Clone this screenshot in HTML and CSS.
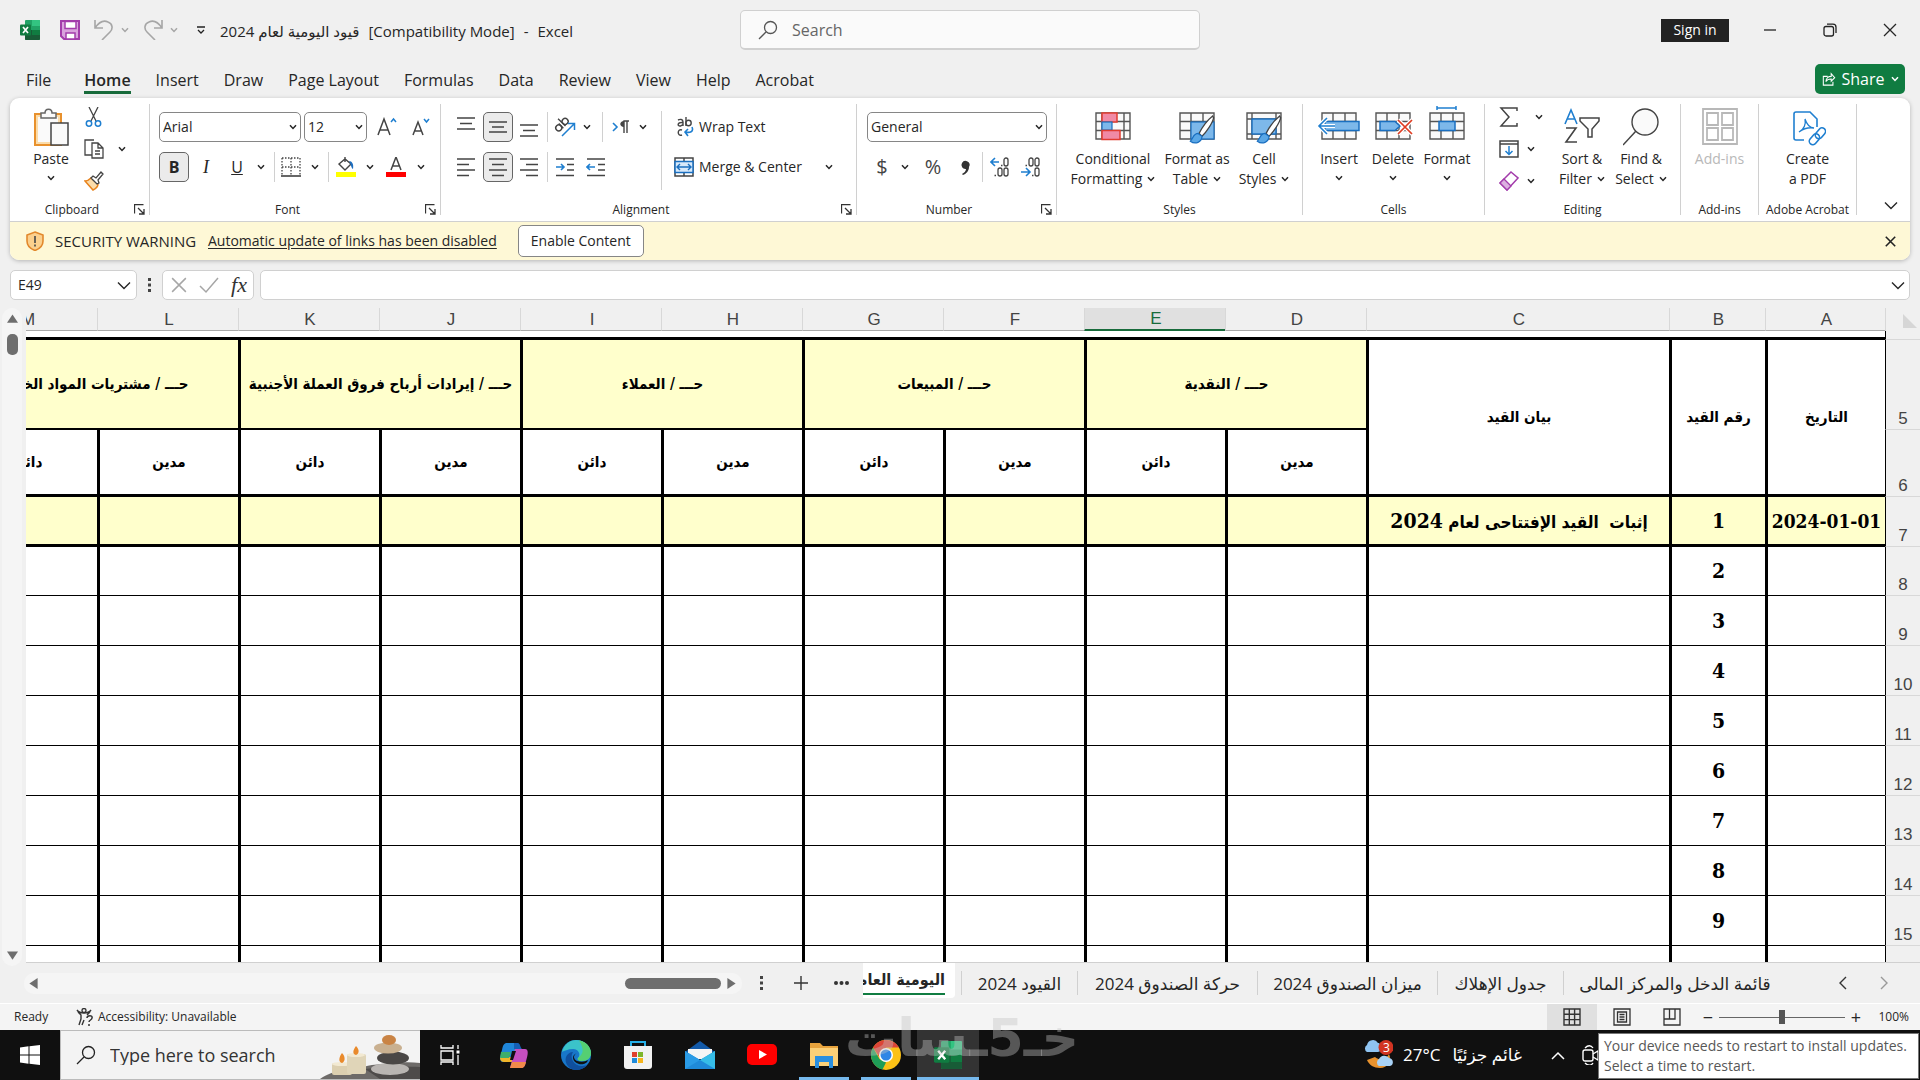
FILE: index.html
```html
<!DOCTYPE html>
<html lang="en">
<head>
<meta charset="utf-8">
<title>Excel</title>
<link rel="stylesheet" href="styles.css">
</head>
<body>
<svg class="defs" aria-hidden="true">
  <symbol id="chev" viewBox="0 0 8 6"><path d="M1 1.2 4 4.4 7 1.2" fill="none" stroke="currentColor" stroke-width="1.5"/></symbol>
  <symbol id="bigchev" viewBox="0 0 14 9"><path d="M1 1.5 7 7.5 13 1.5" fill="none" stroke="currentColor" stroke-width="1.4"/></symbol>
  <symbol id="launch" viewBox="0 0 11 11"><path d="M.5 9.500V.5h9M4 4l5.500 5.500M10 5v5H5" fill="none" stroke="#333" stroke-width="1.300"/></symbol>
  <symbol id="lens" viewBox="0 0 20 20"><circle cx="12.500" cy="7.500" r="6" fill="none" stroke="currentColor" stroke-width="1.300"/><path d="M8 12 1 19" stroke="currentColor" stroke-width="1.300"/></symbol>
  <symbol id="cross" viewBox="0 0 14 14"><path d="M1 1l12 12M13 1 1 13" stroke="currentColor" stroke-width="1.300"/></symbol>
  <symbol id="excel" viewBox="0 0 20 20"><rect x="5" y="0" width="15" height="20" rx="1" fill="#21a366"/><path d="M12 0h7a1 1 0 0 1 1 1v5h-8z" fill="#33c481"/><path d="M5 10h15v9a1 1 0 0 1-1 1H6a1 1 0 0 1-1-1z" fill="#185c37"/><path d="M12 10h8v5h-8z" fill="#107c41"/><rect x="0" y="4.500" width="11" height="11" rx="1" fill="#107c41"/><path d="M3 7l5 6M8 7l-5 6" stroke="#fff" stroke-width="1.700"/></symbol>
  <symbol id="cells" viewBox="0 0 36 28"><path d="M1 1h34v26H1zM1 9.500h34M1 18.500h34M12 1v26M24 1v26" fill="#fafafa" stroke="#555" stroke-width="1.400"/></symbol>
  <symbol id="brush" viewBox="0 0 26 32"><path d="M24 1C19 5 13 13 10 19l3 3C18 17 24 8 25 3z" fill="#fff" stroke="#444" stroke-width="1.300"/><path d="M9 19c-5 0-5 5-8 8 5 4 12 1 12-5z" fill="#5aa7e6" stroke="#1a6fc0" stroke-width="1.300"/></symbol>
</svg>

<header class="titlebar">
  <div class="quick">
    <svg class="i20" aria-hidden="true"><use href="#excel"/></svg>
    <button class="plain" aria-label="Save"><svg class="i20" viewBox="0 0 20 20"><path d="M1 1h18v18H4l-3-3z" fill="#d9a3dd" stroke="#a33cab" stroke-width="2"/><path d="M5 1.500h11v7H5z" fill="#fff" stroke="#a33cab" stroke-width="1.500"/><path d="M6 13h9v6H6z" fill="#fff" stroke="#a33cab" stroke-width="1.500"/></svg></button>
    <button class="plain dim wide" aria-label="Undo"><svg class="i20" viewBox="0 0 20 20"><path d="M1 0v8h8M1 8C5 2 10 0 14 2c5 2 5 7 2 10l-8 8" fill="none" stroke="currentColor" stroke-width="1.600"/></svg><svg class="chev"><use href="#chev"/></svg></button>
    <button class="plain dim wide" aria-label="Redo"><svg class="i20" viewBox="0 0 20 20"><path d="M19 0v8h-8M19 8C15 2 10 0 6 2 1 4 1 9 4 12l8 8" fill="none" stroke="currentColor" stroke-width="1.600"/></svg><svg class="chev"><use href="#chev"/></svg></button>
    <button class="plain" aria-label="Customize"><svg class="custom" viewBox="0 0 10 9"><path d="M1 1h8M2 4l3 3 3-3" fill="none" stroke="#222" stroke-width="1.300"/></svg></button>
    <h1 class="doc"><bdi>قيود اليومية لعام 2024</bdi><span>[Compatibility Mode]</span><span>-</span><span>Excel</span></h1>
  </div>
  <label class="search"><svg class="i20"><use href="#lens"/></svg><input type="text" placeholder="Search" aria-label="Search"></label>
  <div class="winctl">
    <button class="signin">Sign in</button>
    <button class="plain" aria-label="Minimize"><svg class="i14" viewBox="0 0 14 14"><path d="M1 7h12" stroke="#222" stroke-width="1.300"/></svg></button>
    <button class="plain" aria-label="Restore"><svg class="i14" viewBox="0 0 14 14"><rect x="1" y="3.500" width="9.500" height="9.500" rx="2" fill="none" stroke="#222" stroke-width="1.300"/><path d="M4 1.200h6a3 3 0 0 1 3 3V10" fill="none" stroke="#222" stroke-width="1.300"/></svg></button>
    <button class="plain" aria-label="Close"><svg class="i14"><use href="#cross"/></svg></button>
  </div>
</header>

<nav class="tabs">
  <a href="#">File</a><a href="#" class="on">Home</a><a href="#">Insert</a><a href="#">Draw</a><a href="#">Page Layout</a><a href="#">Formulas</a><a href="#">Data</a><a href="#">Review</a><a href="#">View</a><a href="#">Help</a><a href="#">Acrobat</a>
  <button class="share"><svg class="i14" viewBox="0 0 15 16"><path d="M6 5H1v10h11v-4M4 11c0-4 3-6 6-6V2l4 4.500-4 4V8c-3 0-5 1-6 3z" fill="none" stroke="#fff" stroke-width="1.200"/></svg>Share<svg class="chev"><use href="#chev"/></svg></button>
</nav>

<section class="panel">
<div class="ribbon">
  <section class="group g-clip">
    <div class="tools">
      <button class="big"><svg class="art" viewBox="0 0 36 38"><rect x="2" y="6" width="26" height="31" fill="#fbdcaa" stroke="#e8912d" stroke-width="2"/><rect x="5" y="9" width="20" height="25" fill="#fafafa"/><path d="M8 10V5h4c0-5 7-5 7 0h4v5z" fill="#fafafa" stroke="#666" stroke-width="1.500"/><rect x="18" y="15" width="17" height="22" fill="#fafafa" stroke="#444" stroke-width="1.500"/></svg><span>Paste</span><svg class="chev"><use href="#chev"/></svg></button>
      <div class="stack">
        <button class="mini" aria-label="Cut"><svg class="i20" viewBox="0 0 20 20"><path d="M5 0l7 14M14 0 7 14" stroke="#444" stroke-width="1.300" fill="none"/><circle cx="5" cy="16.500" r="2.700" fill="none" stroke="#1f7fd0" stroke-width="1.500"/><circle cx="14" cy="16.500" r="2.700" fill="none" stroke="#1f7fd0" stroke-width="1.500"/></svg></button>
        <button class="mini" aria-label="Copy"><svg class="i20" viewBox="0 0 20 20"><path d="M8 16H1V1h9M8 4h6l5 5v10H8zM14 4v5h5M11 12h5M11 15h5" fill="none" stroke="#444" stroke-width="1.300"/></svg><svg class="chev"><use href="#chev"/></svg></button>
        <button class="mini" aria-label="Format painter"><svg class="i20" viewBox="0 0 20 20"><path d="M7 7c-2 2-4 3-6 3l8 9c4-2 5-4 5-6z" fill="#fbdcaa" stroke="#e8831d" stroke-width="1.500"/><path d="M7 7l2-2 3 2 5-6 2 2-5 6 1 3-2 1z" fill="#fff" stroke="#444" stroke-width="1.300"/></svg></button>
      </div>
    </div>
    <footer><span>Clipboard</span><button class="plain" aria-label="Clipboard settings"><svg class="i11"><use href="#launch"/></svg></button></footer>
  </section>

  <section class="group g-font">
    <div class="tools rows">
      <div class="r-font1">
        <div class="combo"><select aria-label="Font"><option>Arial</option></select><svg class="chev"><use href="#chev"/></svg></div>
        <div class="combo"><select aria-label="Font size"><option>12</option></select><svg class="chev"><use href="#chev"/></svg></div>
        <button class="plain" aria-label="Increase font size"><svg class="i20" viewBox="0 0 20 20"><path d="M1 18 7 2l6 16M3 13h8" fill="none" stroke="#444" stroke-width="1.500"/><path d="M14 5l2.500-3L19 5" fill="none" stroke="#1f7fd0" stroke-width="1.500"/></svg></button>
        <button class="plain" aria-label="Decrease font size"><svg class="i20" viewBox="0 0 20 20"><path d="M2 18 7 5l5 13M4 14h6" fill="none" stroke="#444" stroke-width="1.500"/><path d="M13 2l2.500 3L18 2" fill="none" stroke="#1f7fd0" stroke-width="1.500"/></svg></button>
      </div>
      <div class="r-font2">
        <button class="toggle on bold">B</button>
        <button class="plain ital">I</button>
        <button class="plain under">U</button>
        <svg class="chev"><use href="#chev"/></svg><i class="bar"></i>
        <button class="plain" aria-label="Borders"><svg class="i20" viewBox="0 0 20 20"><path d="M1 1h18M1 10h18M1 1v17M10 1v17M19 1v17" fill="none" stroke="#444" stroke-width="1.300" stroke-dasharray="1.500 1.500"/><path d="M0 19h20" stroke="#333" stroke-width="1.600"/></svg></button>
        <svg class="chev"><use href="#chev"/></svg><i class="bar"></i>
        <button class="plain" aria-label="Fill color"><svg class="i20" viewBox="0 0 20 20"><path d="M9 0v5M3 7l6-5 6 5-6 6z" fill="#fff" stroke="#444" stroke-width="1.400"/><path d="M13 4c3 0 5 3 4 8-2-1-2-5-4-8z" fill="#1f6fc0"/><path d="M0 15h20v5H0z" fill="#ff0"/></svg></button>
        <svg class="chev"><use href="#chev"/></svg>
        <button class="plain" aria-label="Font color"><svg class="i20" viewBox="0 0 20 20"><path d="M5 13 10 0l5 13M7 9h6" fill="none" stroke="#444" stroke-width="1.500"/><path d="M0 15h20v5H0z" fill="red"/></svg></button>
        <svg class="chev"><use href="#chev"/></svg>
      </div>
    </div>
    <footer><span>Font</span><button class="plain" aria-label="Font settings"><svg class="i11"><use href="#launch"/></svg></button></footer>
  </section>

  <section class="group g-align">
    <div class="tools">
      <div class="rows">
        <div class="r-align">
          <button class="plain" aria-label="Top align"><svg class="i20" viewBox="0 0 20 20"><path d="M1 1h18M4 6.500h12M1 12h18" stroke="#444" stroke-width="1.500"/></svg></button>
          <button class="toggle on" aria-label="Middle align"><svg class="i20" viewBox="0 0 20 20"><path d="M1 5h18M4 10h12M1 15h18" stroke="#444" stroke-width="1.500"/></svg></button>
          <button class="plain" aria-label="Bottom align"><svg class="i20" viewBox="0 0 20 20"><path d="M1 8h18M4 13.500h12M1 19h18" stroke="#444" stroke-width="1.500"/></svg></button>
          <i class="bar"></i>
          <button class="plain" aria-label="Orientation"><svg class="i20 over" viewBox="0 0 20 20"><g fill="none" stroke="#444" stroke-width="1.400" transform="rotate(-45 8 8)"><circle cx="3" cy="7" r="3"/><path d="M6 4v6.500M9 0v10.500"/><circle cx="12" cy="7" r="3"/></g><path d="M7 19 19 7M13 6.500h6.500V13" fill="none" stroke="#1f7fd0" stroke-width="1.500"/></svg></button>
          <svg class="chev"><use href="#chev"/></svg><i class="bar"></i>
          <button class="plain" aria-label="Text direction"><svg class="i20" viewBox="0 0 20 20"><path d="M2 6l4 4-4 4" fill="none" stroke="#1f7fd0" stroke-width="1.600"/><path d="M13 16V4h5M16 4v12" fill="none" stroke="#444" stroke-width="1.400"/><path d="M13 4c-5 0-5 6 0 6z" fill="#444"/></svg></button>
          <svg class="chev"><use href="#chev"/></svg>
        </div>
        <div class="r-align">
          <button class="plain" aria-label="Align left"><svg class="i20" viewBox="0 0 20 20"><path d="M1 2h18M1 7.500h12M1 13h18M1 18.500h12" stroke="#444" stroke-width="1.500"/></svg></button>
          <button class="toggle on" aria-label="Center"><svg class="i20" viewBox="0 0 20 20"><path d="M1 2h18M4 7.500h12M1 13h18M4 18.500h12" stroke="#444" stroke-width="1.500"/></svg></button>
          <button class="plain" aria-label="Align right"><svg class="i20" viewBox="0 0 20 20"><path d="M1 2h18M7 7.500h12M1 13h18M7 18.500h12" stroke="#444" stroke-width="1.500"/></svg></button>
          <i class="bar"></i>
          <button class="plain" aria-label="Decrease indent"><svg class="i20" viewBox="0 0 20 20"><path d="M1 2h18M12 7.500h7M12 13h7M1 18.500h18" stroke="#444" stroke-width="1.500"/><path d="M1 10h8M6 7l3 3-3 3" fill="none" stroke="#1f7fd0" stroke-width="1.600"/></svg></button>
          <button class="plain indent2" aria-label="Increase indent"><svg class="i20" viewBox="0 0 20 20"><path d="M1 2h18M12 7.500h7M12 13h7M1 18.500h18" stroke="#444" stroke-width="1.500"/><path d="M1 10h8M4 7l-3 3 3 3" fill="none" stroke="#1f7fd0" stroke-width="1.600"/></svg></button>
        </div>
      </div>
      <div class="rows wraps">
        <button class="wide-btn"><svg class="i20" viewBox="0 0 20 20"><g fill="none" stroke="#444" stroke-width="1.400"><path d="M4 3c2-1 5-1 5 2v4M9 5.500c-6-.5-6 4-2.500 3.500L9 7.500M12 0v9"/><circle cx="14.500" cy="6" r="2.700"/><path d="M8 13c-5-2-5 7 0 5"/></g><path d="M18 10c2 5-2 6-7 5M14 12l-3 3 3 4" fill="none" stroke="#1f7fd0" stroke-width="1.600"/></svg>Wrap Text</button>
        <button class="wide-btn"><svg class="i20" viewBox="0 0 20 20"><path d="M1 1h18v18H1zM10 1v18" fill="#fff" stroke="#444" stroke-width="1.500"/><rect x="1" y="4.500" width="18" height="11" fill="#d7e9fa" stroke="#1a6fc0" stroke-width="1.500"/><path d="M3 10h14M6 7l-3 3 3 3M14 7l3 3-3 3" fill="none" stroke="#1a6fc0" stroke-width="1.400"/></svg><span>Merge &amp; Center</span><svg class="chev"><use href="#chev"/></svg></button>
      </div>
    </div>
    <footer><span>Alignment</span><button class="plain" aria-label="Alignment settings"><svg class="i11"><use href="#launch"/></svg></button></footer>
  </section>

  <section class="group g-num">
    <div class="tools rows">
      <div class="combo"><select aria-label="Number format"><option>General</option></select><svg class="chev"><use href="#chev"/></svg></div>
      <div class="r-num">
        <button class="plain sign">$</button><svg class="chev"><use href="#chev"/></svg>
        <button class="plain sign">%</button>
        <button class="plain" aria-label="Comma style"><svg class="i20" viewBox="0 0 20 20"><path d="M6 6a4 4 0 1 1 7 4c0 4-3 7-6 8l-1-1c2-1 4-3 4-5a4 4 0 0 1-4-6z" fill="#333"/></svg></button>
        <i class="bar"></i>
        <button class="plain" aria-label="Increase decimal"><svg class="i20" viewBox="0 0 20 20"><path d="M9 5H1M5 1 1 5l4 4" fill="none" stroke="#1f7fd0" stroke-width="1.600"/><g fill="none" stroke="#444" stroke-width="1.300"><rect x="14" y="1" width="4" height="8" rx="2"/><rect x="8" y="11" width="4" height="8" rx="2"/><rect x="14" y="11" width="4" height="8" rx="2"/><path d="M11 8.500h1.500M4.500 18.500H6"/></g></svg></button>
        <button class="plain" aria-label="Decrease decimal"><svg class="i20" viewBox="0 0 20 20"><path d="M0 15h9M5 11l4 4-4 4" fill="none" stroke="#1f7fd0" stroke-width="1.600"/><g fill="none" stroke="#444" stroke-width="1.300"><rect x="8" y="1" width="4" height="8" rx="2"/><rect x="14" y="1" width="4" height="8" rx="2"/><rect x="14" y="11" width="4" height="8" rx="2"/><path d="M4.500 8.500H6M11 18.500h1.500"/></g></svg></button>
      </div>
    </div>
    <footer><span>Number</span><button class="plain" aria-label="Number settings"><svg class="i11"><use href="#launch"/></svg></button></footer>
  </section>

  <section class="group g-styles">
    <div class="tools">
      <button class="big"><svg class="art" viewBox="0 0 36 38"><path d="M1 5h34v26H1zM1 13.500h34M1 22.500h34M7 5v26M29 5v26" fill="#fafafa" stroke="#555" stroke-width="1.400"/><rect x="7" y="5" width="15" height="9" fill="#f08aa5" stroke="#e03c31" stroke-width="1.500"/><rect x="7" y="14" width="10" height="8" fill="#7db8ea" stroke="#1a6fc0" stroke-width="1.200"/><rect x="7" y="22.500" width="18" height="9" fill="#f08aa5" stroke="#e03c31" stroke-width="1.500"/></svg><span>Conditional</span><span>Formatting <svg class="chev"><use href="#chev"/></svg></span></button>
      <button class="big w80"><svg class="art" viewBox="0 0 36 38"><path d="M1 5h34v26H1zM1 13.500h34M1 22.500h34M12 5v26M24 5v26" fill="#fafafa" stroke="#555" stroke-width="1.400"/><rect x="12" y="14" width="23" height="17" fill="#7db8ea" stroke="#1a6fc0" stroke-width="1.200"/><use href="#brush" x="10" y="7" width="26" height="31"/></svg><span>Format as</span><span>Table <svg class="chev"><use href="#chev"/></svg></span></button>
      <button class="big w54"><svg class="art" viewBox="0 0 36 38"><path d="M1 5h34v26H1zM1 11h34M1 26h34M6 5v26M30 5v26" fill="#fafafa" stroke="#555" stroke-width="1.400"/><rect x="6" y="11" width="24" height="15" fill="#7db8ea" stroke="#1a6fc0" stroke-width="1.400"/><use href="#brush" x="10" y="7" width="26" height="31"/></svg><span>Cell</span><span>Styles <svg class="chev"><use href="#chev"/></svg></span></button>
    </div>
    <footer><span>Styles</span></footer>
  </section>

  <section class="group g-cells">
    <div class="tools">
      <button class="big w54"><svg class="art over" viewBox="0 0 36 38"><use href="#cells" x="0" y="4" width="36" height="28"/><path d="M4 13.500h34v9H4z" fill="#7db8ea" stroke="#1a6fc0" stroke-width="1.500"/><path d="M14 18H-1M6 10l-8 8 8 8" fill="none" stroke="#fff" stroke-width="4"/><path d="M14 18H-1M6 10l-8 8 8 8" fill="none" stroke="#1f7fd0" stroke-width="1.600"/></svg><span>Insert</span><svg class="chev"><use href="#chev"/></svg></button>
      <button class="big w54"><svg class="art over" viewBox="0 0 36 38"><use href="#cells" x="0" y="4" width="36" height="28"/><path d="M5 13.500h15l5 4.500-5 4.500H5z" fill="#7db8ea" stroke="#1a6fc0" stroke-width="1.500"/><path d="M23 12l14 14M37 12 23 26" stroke="#fff" stroke-width="4"/><path d="M23 12l14 14M37 12 23 26" stroke="#e03c21" stroke-width="1.700"/></svg><span>Delete</span><svg class="chev"><use href="#chev"/></svg></button>
      <button class="big w54"><svg class="art over" viewBox="0 0 36 38"><use href="#cells" x="0" y="4" width="36" height="28"/><rect x="10" y="13.500" width="16" height="9" fill="#7db8ea" stroke="#1a6fc0" stroke-width="1.500"/><path d="M8-2v4M27-2v4M8 0h19" stroke="#1f7fd0" stroke-width="1.500"/></svg><span>Format</span><svg class="chev"><use href="#chev"/></svg></button>
    </div>
    <footer><span>Cells</span></footer>
  </section>

  <section class="group g-edit">
    <div class="tools">
      <div class="stack">
        <button class="mini" aria-label="AutoSum"><svg class="i20" viewBox="0 0 20 20"><path d="M18 4V1H2l8 9-8 9h16v-3" fill="none" stroke="#444" stroke-width="1.500"/></svg><svg class="chev far"><use href="#chev"/></svg></button>
        <button class="mini" aria-label="Fill"><svg class="i20" viewBox="0 0 20 20"><path d="M1 2h18v16H1zM1 5h18" fill="#fff" stroke="#444" stroke-width="1.500"/><path d="M10 7v8M6.500 12l3.500 3.500 3.500-3.500" fill="none" stroke="#1f7fd0" stroke-width="1.500"/></svg><svg class="chev"><use href="#chev"/></svg></button>
        <button class="mini" aria-label="Clear"><svg class="i20" viewBox="0 0 20 20"><path d="M12 1l7 6-11 12-7-7z" fill="#fff" stroke="#a33cab" stroke-width="1.500"/><path d="M5 8l7 7-4 4-7-7z" fill="#dcb0e0" stroke="#a33cab" stroke-width="1.300"/></svg><svg class="chev"><use href="#chev"/></svg></button>
      </div>
      <button class="big w56"><svg class="art" viewBox="0 0 36 38"><path d="M1 16 7 2l6 14M3 11h8" fill="none" stroke="#1f7fd0" stroke-width="1.600"/><path d="M2 20h10L2 34h11" fill="none" stroke="#444" stroke-width="1.600"/><path d="M16 10h19v3l-7 8v8h-4v-8l-8-8z" fill="#fff" stroke="#444" stroke-width="1.500"/></svg><span>Sort &amp;</span><span>Filter <svg class="chev"><use href="#chev"/></svg></span></button>
      <button class="big w62"><svg class="art" viewBox="0 0 36 38"><circle cx="22" cy="14" r="13" fill="#fafafa" stroke="#444" stroke-width="1.400"/><path d="M13 23 0 37" stroke="#444" stroke-width="1.500"/></svg><span>Find &amp;</span><span>Select <svg class="chev"><use href="#chev"/></svg></span></button>
    </div>
    <footer><span>Editing</span></footer>
  </section>

  <section class="group g-add">
    <div class="tools"><button class="big off" disabled><svg class="art" viewBox="0 0 36 38"><path d="M1 1h34v35H1zM5 5h11v12H5zM20 5h11v12H20zM5 20h11v12H5zM20 20h11v12H20z" fill="none" stroke="#b8b8b8" stroke-width="1.800"/></svg><span>Add-ins</span></button></div>
    <footer><span>Add-ins</span></footer>
  </section>

  <section class="group g-pdf">
    <div class="tools"><button class="big"><svg class="art" viewBox="0 0 36 38"><path d="M14 32H6a2 2 0 0 1-2-2V6a2 2 0 0 1 2-2h14l7 7v8" fill="none" stroke="#1f7fd0" stroke-width="1.600"/><path d="M9 24c5-3 7-8 6-13 2 6 5 9 9 9-6-1-11 1-15 4z" fill="none" stroke="#1f7fd0" stroke-width="1.300"/><g fill="none" stroke="#1f7fd0" stroke-width="1.600"><rect x="18" y="28" width="12" height="7" rx="3.500" transform="rotate(-50 24 31)"/><rect x="24" y="22" width="12" height="7" rx="3.500" transform="rotate(-50 30 25)"/></g></svg><span>Create</span><span>a PDF</span></button></div>
    <footer><span>Adobe Acrobat</span></footer>
  </section>
  <button class="plain collapse" aria-label="Collapse ribbon"><svg class="i14 flat"><use href="#bigchev"/></svg></button>
</div>

<div class="warning">
  <svg class="shield" viewBox="0 0 18 20"><path d="M9 1l8 3v6c0 5-4 8-8 9.500C5 18 1 15 1 10V4z" fill="#fbd08d" stroke="#e2882c" stroke-width="1.600"/><path d="M9 5v7M9 13.500v2" stroke="#444" stroke-width="1.600"/></svg>
  <strong>SECURITY WARNING</strong>
  <a href="#">Automatic update of links has been disabled</a>
  <button class="enable">Enable Content</button>
  <button class="plain dismiss" aria-label="Close"><svg class="i11" viewBox="0 0 14 14"><path d="M1 1l12 12M13 1 1 13" stroke="#222" stroke-width="2"/></svg></button>
</div>
</section>

<div class="formula">
  <div class="namebox"><input type="text" value="E49" aria-label="Name box"><svg class="i14 flat"><use href="#bigchev"/></svg></div>
  <svg class="dots" viewBox="0 0 4 14"><path d="M0 0h3v3H0zM0 5.500h3v3H0zM0 11h3v3H0z" fill="#444"/></svg>
  <div class="fx"><button class="plain dim" aria-label="Cancel"><svg class="i14 x16"><use href="#cross"/></svg></button><button class="plain dim" aria-label="Enter"><svg class="i20" viewBox="0 0 20 20"><path d="M1 11l6 6L19 3" fill="none" stroke="currentColor" stroke-width="1.500"/></svg></button><button class="plain fxb">fx</button></div>
  <div class="entry"><input type="text" aria-label="Formula bar"><svg class="i14 flat"><use href="#bigchev"/></svg></div>
</div>

<main class="sheet">
  <div class="vscroll"><svg class="arr" viewBox="0 0 12 9"><path d="M6 0l6 9H0z" fill="#6e6e6e"/></svg><i class="vthumb"></i><svg class="arr end" viewBox="0 0 12 9"><path d="M6 9l6-9H0z" fill="#6e6e6e"/></svg></div>
  <div class="grid" dir="rtl">
    <table>
      <colgroup><col class="c-row"><col class="c-a"><col class="c-b"><col class="c-c"><col span="10" class="c-n"></colgroup>
      <thead>
        <tr><th class="corner"><svg viewBox="0 0 14 14"><path d="M0 0l14 14H0z" fill="#d6d6d6"/></svg></th><th>A</th><th>B</th><th>C</th><th>D</th><th class="sel">E</th><th>F</th><th>G</th><th>H</th><th>I</th><th>J</th><th>K</th><th>L</th><th>M</th></tr>
      </thead>
      <tbody>
        <tr class="r4"><th></th><td colspan="13"></td></tr>
        <tr class="r5"><th>5</th><td rowspan="2">التاريخ</td><td rowspan="2">رقم القيد</td><td rowspan="2">بيان القيد</td><td colspan="2">حـــ / النقدية</td><td colspan="2">حـــ / المبيعات</td><td colspan="2">حـــ / العملاء</td><td colspan="2">حـــ / إيرادات أرباح فروق العملة الأجنبية</td><td colspan="2">حـــ / مشتريات المواد الخام</td></tr>
        <tr class="r6"><th>6</th><td>مدين</td><td>دائن</td><td>مدين</td><td>دائن</td><td>مدين</td><td>دائن</td><td>مدين</td><td>دائن</td><td>مدين</td><td>دائن</td></tr>
        <tr class="r7"><th>7</th><td class="num date"><bdi dir="ltr">2024-01-01</bdi></td><td class="num">1</td><td class="entry7">إثبات&nbsp; القيد الإفتتاحى لعام <b class="num">2024</b></td><td></td><td></td><td></td><td></td><td></td><td></td><td></td><td></td><td></td><td></td></tr>
        <tr class="r8"><th>8</th><td></td><td class="num">2</td><td></td><td></td><td></td><td></td><td></td><td></td><td></td><td></td><td></td><td></td><td></td></tr>
        <tr><th>9</th><td></td><td class="num">3</td><td></td><td></td><td></td><td></td><td></td><td></td><td></td><td></td><td></td><td></td><td></td></tr>
        <tr><th>10</th><td></td><td class="num">4</td><td></td><td></td><td></td><td></td><td></td><td></td><td></td><td></td><td></td><td></td><td></td></tr>
        <tr><th>11</th><td></td><td class="num">5</td><td></td><td></td><td></td><td></td><td></td><td></td><td></td><td></td><td></td><td></td><td></td></tr>
        <tr><th>12</th><td></td><td class="num">6</td><td></td><td></td><td></td><td></td><td></td><td></td><td></td><td></td><td></td><td></td><td></td></tr>
        <tr><th>13</th><td></td><td class="num">7</td><td></td><td></td><td></td><td></td><td></td><td></td><td></td><td></td><td></td><td></td><td></td></tr>
        <tr><th>14</th><td></td><td class="num">8</td><td></td><td></td><td></td><td></td><td></td><td></td><td></td><td></td><td></td><td></td><td></td></tr>
        <tr><th>15</th><td></td><td class="num">9</td><td></td><td></td><td></td><td></td><td></td><td></td><td></td><td></td><td></td><td></td><td></td></tr>
        <tr><th></th><td></td><td></td><td></td><td></td><td></td><td></td><td></td><td></td><td></td><td></td><td></td><td></td><td></td></tr>
      </tbody>
    </table>
  </div>
</main>

<div class="sheets">
  <div class="hscroll"><svg class="harr" viewBox="0 0 9 12"><path d="M0 6l9-6v12z" fill="#6e6e6e"/></svg><i class="hthumb"></i><svg class="harr" viewBox="0 0 9 12"><path d="M9 6 0 0v12z" fill="#6e6e6e"/></svg></div>
  <svg class="dots" viewBox="0 0 4 14"><path d="M0 0h3v3H0zM0 5.500h3v3H0zM0 11h3v3H0z" fill="#444"/></svg>
  <button class="plain add" aria-label="New sheet"><svg class="i14" viewBox="0 0 14 14"><path d="M7 0v14M0 7h14" stroke="#333" stroke-width="1.400"/></svg></button>
  <svg class="more" viewBox="0 0 15 4"><circle cx="2" cy="2" r="2"/><circle cx="7.500" cy="2" r="2"/><circle cx="13" cy="2" r="2"/></svg>
  <a href="#" class="tab on" dir="rtl"><span>اليومية العامة</span></a>
  <a href="#" class="tab t1" dir="rtl">القيود 2024</a>
  <a href="#" class="tab t2" dir="rtl">حركة الصندوق 2024</a>
  <a href="#" class="tab t2" dir="rtl">ميزان الصندوق 2024</a>
  <a href="#" class="tab t3" dir="rtl">جدول الإهلاك</a>
  <a href="#" class="tab t4" dir="rtl">قائمة الدخل والمركز المالى</a>
  <div class="pager"><svg class="pg" viewBox="0 0 8 14"><path d="M7 1 1 7l6 6" fill="none" stroke="#333" stroke-width="1.400"/></svg><svg class="pg" viewBox="0 0 8 14"><path d="M1 1l6 6-6 6" fill="none" stroke="#999" stroke-width="1.400"/></svg></div>
</div>

<div class="status">
  <span class="ready">Ready</span>
  <svg class="i18" viewBox="0 0 18 18"><circle cx="8" cy="2.500" r="2" fill="none" stroke="#333" stroke-width="1.300"/><path d="M1 2c2 3 4 3 7 3s5 0 7-3M2 4l3 3v4l-2 6M8 12l-2 5M11 7l3-3" fill="none" stroke="#333" stroke-width="1.400"/><path d="M11 10c0-3 6-3 5 0 0 2-3 2-3 4M13 16v2" fill="none" stroke="#333" stroke-width="1.500"/></svg>
  <span>Accessibility: Unavailable</span>
  <div class="views">
    <button class="view on" aria-label="Normal"><svg class="i18" viewBox="0 0 18 18"><path d="M1 1h16v16H1zM1 6.300h16M1 11.600h16M6.300 1v16M11.600 1v16" fill="none" stroke="#333" stroke-width="1.400"/></svg></button>
    <button class="view" aria-label="Page layout"><svg class="i18" viewBox="0 0 18 18"><path d="M1 1h16v16H1zM4.500 4h9v10h-9zM6.500 6.500h5M6.500 9h5M6.500 11.500h5" fill="none" stroke="#333" stroke-width="1.300"/></svg></button>
    <button class="view" aria-label="Page break"><svg class="i18" viewBox="0 0 18 18"><path d="M1 1h16v16H1zM1 11h11V1M6.500 1v10" fill="none" stroke="#333" stroke-width="1.300"/></svg></button>
    <span class="sg">−</span><input type="range" class="zoom" min="0" max="100" value="50" aria-label="Zoom"><span class="sg">+</span><span class="pct">100%</span>
  </div>
</div>

<div class="taskbar">
  <button class="plain start" aria-label="Start"><svg class="i20" viewBox="0 0 20 20"><path d="M0 2.500 8.500 1.300V9.500H0zM9.500 1.200 20 0v9.500H9.500zM0 10.500h8.500v8.200L0 17.500zM9.500 10.500H20V20L9.500 18.800z" fill="#fff"/></svg></button>
  <div class="tsearch">
    <svg class="i20"><use href="#lens"/></svg><input type="text" placeholder="Type here to search" aria-label="Type here to search">
    <svg class="scene" viewBox="0 0 100 48"><path d="M0 48c14-10 30-9 52-14 20-2 34-4 48-2v16z" fill="#6d6a68"/><path d="M45 38c20-3 40-3 55-2v12H60z" fill="#4e4b4a"/><rect x="12" y="32" width="20" height="12" rx="2" fill="#dccfb0"/><ellipse cx="22" cy="33" rx="10" ry="2" fill="#f2e9d2"/><rect x="27" y="23" width="19" height="20" rx="2" fill="#e0d5b8"/><ellipse cx="36" cy="24" rx="9" ry="2" fill="#f2e9d2"/><path d="M22 22c4 4 3 9 0 10-4-1-3-6 0-10zM36 15c4 4 3 8 0 9-4-1-3-5 0-9z" fill="#e98a2b"/><ellipse cx="70" cy="38" rx="19" ry="6" fill="#b9b5b2"/><ellipse cx="73" cy="27" rx="16" ry="6.500" fill="#4a4746"/><ellipse cx="68" cy="17" rx="14" ry="5.500" fill="#c9b090"/><ellipse cx="69" cy="9" rx="7" ry="5" fill="#c98344"/></svg>
  </div>
  <div class="apps">
    <button class="app tv" aria-label="Task view"><svg class="i20" viewBox="0 0 20 20"><path d="M1 0v3h12V0M1 6h12v9H1zM1 20v-3h12v3M18 0v4M18 10v10" fill="none" stroke="#fff" stroke-width="1.300"/><path d="M16.500 5.500h3v3h-3z" fill="#fff"/></svg></button>
    <button class="app" aria-label="Copilot"><svg class="i30" viewBox="0 0 30 30"><path d="M8 3h11l-5 19H4C0 22 1 16 3 10 4 5 5 3 8 3z" fill="#1f86d9"/><path d="M1 17c0 5 3 5 6 5h7l1-5z" fill="#f0b529"/><path d="M2 12h10l-2 6H1z" fill="#3fae6b"/><path d="M22 28H11l5-19h10c4 0 3 6 1 12-1 5-2 7-5 7z" fill="#c54fc0"/><path d="M11 28h11c3 0 4-2 5-6H13z" fill="#f08a4a"/><path d="M15 3h4c2 0 2 4 4 6h-8z" fill="#155fb5"/><path d="M13 11h4l-3 9h-3z" fill="#101010"/></svg></button>
    <button class="app" aria-label="Edge"><svg class="i30" viewBox="0 0 30 30"><circle cx="15" cy="15" r="15" fill="#1877c9"/><path d="M1 12C3 4 9 0 15 0c9 0 15 7 15 13 0 5-4 8-9 8-4 0-5-2-4-3 3-3 1-9-5-9-5 0-9 2-11 3z" fill="#3bc3c9"/><path d="M18 .4C25 1 30 7 30 13c0 5-4 8-9 8-4 0-5-2-4-3 5-4 7-8 1-17.600z" fill="#55cf72"/><path d="M12 12c-4 6 1 14 9 14 3 0 5-1 6-2-3 4-7 6-12 6C8 30 3 23 5 17c1-3 4-5 7-5z" fill="#0f4f9e"/><path d="M16 13c-4 2-4 6 0 8 4 1 8 1 11-1-1 4-6 5-9 4-7-2-8-9-2-11z" fill="#101010"/></svg></button>
    <button class="app" aria-label="Store"><svg class="i30" viewBox="0 0 30 30"><path d="M8 7V2h14v5" fill="none" stroke="#27b0e8" stroke-width="2"/><path d="M1 6h28v20a3 3 0 0 1-3 3H4a3 3 0 0 1-3-3z" fill="#f1f1f1"/><path d="M9 12h5v5H9z" fill="#e0402c"/><path d="M15 12h5v5h-5z" fill="#7db52a"/><path d="M9 18h5v5H9z" fill="#1f8ad9"/><path d="M15 18h5v5h-5z" fill="#f5b41c"/></svg></button>
    <button class="app" aria-label="Mail"><svg class="i30" viewBox="0 0 30 30"><path d="M0 12 15 1l15 11z" fill="#1259a8"/><path d="M3 9h24v10H3z" fill="#f5f5f5"/><path d="M0 11l15 9 15-9v18H0z" fill="#1f8ad9"/><path d="M0 11l15 9-15 9z" fill="#2a9be6"/><path d="M30 11v18L15 20z" fill="#36bde8"/></svg></button>
    <button class="app" aria-label="YouTube"><svg class="i30" viewBox="0 0 30 30"><rect y="4" width="30" height="21" rx="5" fill="#f00"/><path d="M12 10l8 4.500-8 4.500z" fill="#fff"/></svg></button>
    <button class="app open" aria-label="File Explorer"><svg class="i30" viewBox="0 0 30 30"><path d="M1 3h10l3 3h15v20H1z" fill="#e8a33d"/><path d="M1 8h28v18H1z" fill="#fcd077"/><path d="M6 28V16h18v12h-4v-6H10v6z" fill="#2a8fe0"/></svg></button>
    <button class="app open" aria-label="Chrome"><svg class="i30" viewBox="0 0 30 30"><circle cx="15" cy="15" r="15" fill="#fbc116"/><path d="M15 0a15 15 0 0 1 13 7.500H15L9 18 2 7.500A15 15 0 0 1 15 0z" fill="#dc4437"/><path d="M2 7.500 8.500 19 15 22.500 11.500 29.600A15 15 0 0 1 2 7.500z" fill="#1f9d57"/><circle cx="15" cy="15" r="7" fill="#fff"/><circle cx="15" cy="15" r="5.500" fill="#2f86e6"/></svg></button>
    <button class="app open active" aria-label="Excel"><svg class="i28"><use href="#excel"/></svg></button>
  </div>
  <div class="tray">
    <svg class="i30" viewBox="0 0 30 30"><path d="M12 17a9 9 0 0 0 14-3c3 6-1 14-9 14-6 0-11-3-13-8z" fill="#e8922d"/><path d="M4 12a4 4 0 0 1 0-7 6 6 0 0 1 11-2c4 0 5 9 0 9z" fill="#8fc4f2"/><path d="M16 26a4 4 0 0 1 0-7 6 6 0 0 1 10-1c5 0 5 8 1 8z" fill="#a8d2f6"/><circle cx="23" cy="7.500" r="7.500" fill="#d13422"/><text x="20" y="12" font-size="12" fill="#fff">3</text></svg>
    <span class="wx"><span>27°C</span><bdi dir="rtl">غائم جزئيًا</bdi></span>
    <svg class="up" viewBox="0 0 14 9"><path d="M1 8l6-6 6 6" fill="none" stroke="#fff" stroke-width="1.500"/></svg>
    <svg class="i20" viewBox="0 0 20 20"><rect x="1" y="5" width="10" height="11" rx="2" fill="none" stroke="#fff" stroke-width="1.400"/><path d="M11 9l5-3v9l-5-3M3 3c3-3 6-3 8 0M3 18c3 3 6 3 8 0" fill="none" stroke="#fff" stroke-width="1.300"/></svg>
  </div>
  <div class="tip" role="tooltip">Your device needs to restart to install updates.<br>Select a time to restart.</div>
  <div class="mark" dir="rtl">خـ5ـسات</div>
</div>
</body>
</html>
```
FILE: styles.css
```css
* { box-sizing: border-box; }
body {
  margin: 0;
  height: 100vh;
  display: flex;
  flex-direction: column;
  overflow: hidden;
  background: #f0f0f0;
  color: #262626;
  font: 14px/20px "Open Sans", "DejaVu Sans", sans-serif;
}
button, input, select { font: inherit; color: inherit; margin: 0; padding: 0; }
button { border: 0; background: none; }
a { color: inherit; text-decoration: none; }
svg { display: block; flex: none; }
.defs { position: absolute; width: 0; height: 0; }
.over { overflow: visible; }
.plain { display: flex; align-items: center; justify-content: center; }
.dim { color: #a6a6a6; }
.i11 { width: 11px; height: 11px; }
.i14 { width: 14px; height: 14px; }
.i18 { width: 18px; height: 18px; }
.i20 { width: 20px; height: 20px; }
.i28 { width: 28px; height: 28px; }
.i30 { width: 30px; height: 30px; }
.flat { height: 9px; }
.chev { width: 8px; height: 6px; }

/* title bar */
.titlebar {
  height: 60px;
  flex: none;
  display: grid;
  grid-template-columns: 1fr 460px 1fr;
  align-items: center;
  padding-left: 20px;
}
.quick { display: flex; align-items: center; gap: 20px; }
.quick .plain.wide { gap: 7px; }
.quick .wide { margin-left: -6px; }
.custom { width: 10px; height: 9px; }
.quick .wide + .plain:not(.wide) { margin: 0 -6px 0 -2px; }
.doc { margin: 0; padding-top: 1px; display: flex; gap: 9px; font-size: 15px; line-height: 20px; font-weight: 400; white-space: nowrap; }
.search {
  height: 40px;
  display: flex;
  align-items: center;
  gap: 14px;
  padding-left: 17px;
  border: 1px solid #d0d0d0;
  border-bottom-width: 2px;
  border-radius: 5px;
  background: #fafafa;
  color: #555;
  font-size: 16px;
}
.search input { flex: 1; border: 0; background: none; outline: 0; }
::placeholder { color: #666; opacity: 1; }
.winctl { display: flex; align-items: center; justify-content: flex-end; gap: 46px; padding-right: 23px; }
.signin { width: 68px; height: 23px; background: #222; color: #fff; margin-right: -12px; }

/* ribbon tabs */
.tabs { height: 38px; flex: none; display: flex; align-items: center; gap: 25px; padding: 0 15px 0 26px; font-size: 16px; white-space: nowrap; }
.tabs a { padding: 6px 0 1px; border-bottom: 3px solid transparent; }
.tabs a:first-child { margin-right: 8px; }
.tabs .on { font-weight: 600; border-color: #186b3b; }
.share {
  width: 90px;
  height: 30px;
  margin-left: auto;
  display: flex;
  align-items: center;
  justify-content: center;
  gap: 6px;
  background: #107c41;
  color: #fff;
  border-radius: 5px;
}

/* ribbon */
.panel { margin: 0 10px; flex: none; border-radius: 9px; overflow: hidden; background: #fff; box-shadow: 0 1px 4px rgba(0, 0, 0, .25); }
.ribbon { display: flex; height: 124px; border-bottom: 1px solid #d0d0d0; }
.group { margin: 6px 0; border-right: 1px solid #d0d0d0; display: flex; flex-direction: column; justify-content: space-between; flex: none; }
.tools { display: flex; height: 94px; }
.group footer { display: flex; align-items: center; height: 12px; padding-right: 4px; font-size: 12px; line-height: 14px; white-space: nowrap; }
.group footer span { flex: 1; text-align: center; padding-top: 2px; }
.g-clip { width: 140px; }
.g-clip .tools { padding-left: 14px; }
.g-font { width: 291px; }
.g-font .tools { padding-left: 9px; }
.g-align { width: 416px; }
.g-align .tools { padding-left: 8px; }
.g-num { width: 200px; }
.g-num .tools { padding-left: 10px; padding-right: 9px; }
.g-styles { width: 246px; }
.g-styles .tools { padding-left: 12px; }
.g-cells { width: 182px; }
.g-cells .tools { padding-left: 9px; }
.g-edit { width: 196px; }
.g-edit .tools { padding-left: 8px; }
.g-add { width: 78px; }
.g-pdf { width: 98px; }
.g-add .tools, .g-pdf .tools { justify-content: center; }
.g-styles footer, .g-cells footer, .g-edit footer, .g-add footer, .g-pdf footer { padding-right: 0; }
.collapse { margin-left: auto; width: 38px; align-items: flex-end; padding-bottom: 11px; }

.big { width: 88px; display: flex; flex-direction: column; align-items: center; padding-top: 4px; white-space: nowrap; }
.big .art { width: 36px; height: 38px; margin-bottom: 3px; }
.big span { display: flex; align-items: center; gap: 5px; height: 20px; }
.big > .chev { margin-top: 6px; }
.g-clip .big, .w54 { width: 54px; }
.w56 { width: 56px; }
.w62 { width: 62px; }
.w80 { width: 80px; }
.off { color: #b8b8b8; }
.stack { display: flex; flex-direction: column; gap: 10px; padding-top: 2px; width: 61px; }
.mini { display: flex; align-items: center; gap: 14px; height: 22px; padding-left: 6px; }
.g-edit .mini { gap: 8px; }
.g-edit .mini .far { margin-left: 8px; }

.rows { display: flex; flex-direction: column; gap: 10px; padding-top: 8px; }
.r-font1, .r-font2, .r-align, .r-num { display: grid; height: 30px; align-items: center; justify-items: center; }
.r-font1 { grid-template-columns: 142px 69px 34px 34px; }
.r-font1 .combo + .combo { width: 63px; }
.r-font2 { grid-template-columns: 30px 34px 28px 20px 6px 28px 20px 6px 30px 18px 34px 16px; }
.r-align { grid-template-columns: 34px 30px 32px 4px 32px 12px 18px 20px 24px; }
.r-num { grid-template-columns: 30px 16px 40px 26px 6px 30px 32px; }
.indent2 { grid-column: 6 / 8; }
.bar { width: 1px; height: 30px; background: #d0d0d0; }
.combo { position: relative; width: 100%; height: 30px; }
.combo select { appearance: none; width: 100%; height: 100%; padding-left: 3px; border: 1px solid #868686; border-radius: 5px; background: #fff; }
.combo .chev { position: absolute; right: 4px; top: 12px; }
.toggle { width: 30px; height: 30px; display: flex; align-items: center; justify-content: center; border-radius: 5px; }
.toggle.on { background: #ebebeb; border: 1px solid #666; }
.bold { font-weight: 700; font-size: 16px; }
.ital { font: italic 18px/20px "Liberation Serif", serif; }
.under { text-decoration: underline; font-size: 16px; }
.sign { font-size: 20px; color: #444; }
.wraps { margin: 7px 0 8px 6px; padding: 1px 0 0 12px; border-left: 1px solid #d0d0d0; }
.wide-btn { height: 30px; display: flex; align-items: center; gap: 5px; white-space: nowrap; }
.wide-btn .chev { margin-left: 18px; }

/* security bar */
.warning { height: 38px; display: flex; align-items: center; background: #fef8d6; padding: 0 14px 0 16px; white-space: nowrap; }
.shield { width: 18px; height: 20px; margin-right: 11px; }
.warning strong { font-weight: 400; font-size: 15px; width: 153px; }
.warning a { text-decoration: underline; text-underline-offset: 2px; margin-right: 21px; }
.enable { height: 32px; width: 126px; border: 1px solid #868686; border-radius: 5px; background: #fff; }
.dismiss { margin-left: auto; }

/* formula bar */
.formula { display: flex; align-items: center; flex: none; padding: 10px 10px 8px; height: 48px; }
.namebox, .fx, .entry { height: 30px; display: flex; align-items: center; background: #fff; border: 1px solid #d0d0d0; border-radius: 5px; }
.formula input { flex: 1; min-width: 0; border: 0; background: none; outline: 0; }
.namebox { width: 127px; padding: 0 5px 0 7px; }
.dots { width: 4px; height: 14px; margin: 0 10px 0 11px; }
.fx { width: 92px; justify-content: space-between; padding: 0 6px 0 8px; }
.x16 { width: 16px; height: 16px; }
.fxb { font: italic 22px/24px "Liberation Serif", serif; color: #333; }
.entry { flex: 1; margin-left: 6px; padding-right: 4px; }

/* sheet */
.sheet { flex: 1; min-height: 0; display: flex; }
.vscroll { width: 20px; margin: 0 4px 0 2px; height: calc(100% + 3px); background: #f5f5f5; border-radius: 10px; display: flex; flex-direction: column; align-items: center; padding: 6px 0; }
.arr { width: 11px; height: 9px; }
.arr.end { margin-top: auto; }
.vthumb { width: 11px; height: 21px; border-radius: 5px; background: #6e6e6e; margin-top: 11px; }
.grid { flex: 1; min-width: 0; overflow: hidden; border-bottom: 1px solid #d0d0d0; }
table { border-collapse: separate; border-spacing: 0; table-layout: fixed; width: 1964px; }
.c-row { width: 35px; }
.c-a { width: 120px; }
.c-b { width: 96px; }
.c-c { width: 303px; }
.c-n { width: 141px; }
th { padding: 0; font: 17px/20px "Liberation Sans", sans-serif; color: #444; background: #f0f0f0; }
thead th { height: 22px; padding: 1px 0 0 2px; border-bottom: 1px solid #a8a8a8; border-left: 1px solid #d8d8d8; }
thead th.sel { background: #e0e0e0; color: #186b3b; border-bottom: 2px solid #186b3b; }
thead .corner { border-bottom: 0; padding: 2px 3px 0 18px; }
.corner svg { width: 14px; height: 14px; }
tbody th { border-bottom: 1px solid #d8d8d8; border-left: 1px solid #000; vertical-align: bottom; }
tbody tr { height: 50px; }
td { height: 50px; padding: 0; text-align: center; white-space: nowrap; overflow: hidden; background: #fff; color: #000; border-left: 3px solid #000; border-bottom: 1px solid #000; font: bold 15px/20px "DejaVu Sans Condensed", "DejaVu Sans", sans-serif; }
.num { font: bold 21px/24px "DejaVu Serif Condensed", "Liberation Serif", serif; }
.date { font-size: 19px; }
.r4, .r4 td { height: 9px; line-height: 0; }
.r4 td { border-left: 0; border-bottom-width: 3px; }
.r5, .r5 td { height: 90px; }
.r5 td { border-bottom-width: 2px; }
.r5 td[rowspan] { border-bottom-width: 3px; }
.r5 td[colspan] { background: #ffc; }
.r6, .r6 td { height: 67px; }
.r6 td, .r7 td { border-bottom-width: 3px; }
.r7 td { background: #ffc; }
.r8, .r8 td { height: 49px; }
.entry7 { font-size: 17px; }

/* sheet tabs */
.sheets { height: 40px; flex: none; display: flex; align-items: center; padding-left: 24px; font-size: 17px; white-space: nowrap; }
.hscroll { flex: 1; height: 21px; display: flex; align-items: center; justify-content: flex-end; gap: 6px; padding: 0 6px 0 5px; border-radius: 10px; background: #f5f5f5; }
.harr { width: 9px; height: 11px; }
.harr:first-child { margin-right: auto; }
.hthumb { width: 96px; height: 11px; border-radius: 6px; background: #6e6e6e; }
.sheets .dots { margin: 0 18px; }
.add { margin: 0 12px; }
.more { width: 15px; height: 4px; margin: 0 14px; fill: #333; }
.tab { border-right: 1px solid #d0d0d0; height: 24px; line-height: 26px; text-align: center; flex: none; }
.tab.on { width: 92px; height: 35px; padding: 0 10px 0 0; align-self: flex-start; border: 0; border-radius: 0 0 4px 0; background: #fff; font: bold 16px/34px "DejaVu Sans Condensed", "DejaVu Sans", sans-serif; text-align: right; }
.tab.on span { display: block; height: 32px; border-bottom: 2px solid #107c41; overflow: hidden; }
.t1 { width: 117px; margin-left: 6px; border-left: 1px solid #d0d0d0; }
.t2 { width: 180px; }
.t3 { width: 126px; }
.t4 { width: 222px; border: 0; }
.pager { width: 134px; display: flex; justify-content: flex-end; gap: 33px; padding-right: 32px; }
.pg { width: 8px; height: 14px; }

/* status bar */
.status { height: 27px; flex: none; display: flex; align-items: center; padding-left: 14px; gap: 4px; border-top: 1px solid #fff; background: #f4f4f4; font-size: 12px; white-space: nowrap; }
.ready { width: 58px; }
.views { margin-left: auto; height: 100%; display: flex; align-items: center; padding-right: 11px; }
.view { width: 50px; height: 100%; display: flex; align-items: center; justify-content: center; }
.view.on { background: #e0e0e0; }
.sg { width: 22px; text-align: center; font-size: 18px; }
.zoom { appearance: none; width: 126px; height: 14px; margin: 0; background: linear-gradient(#666, #666) center / 100% 1px no-repeat; }
.zoom::-webkit-slider-thumb { appearance: none; width: 6px; height: 14px; background: #555; }
.pct { margin-left: 9px; width: 33px; text-align: right; }

/* task bar */
.taskbar { position: relative; height: 50px; flex: none; display: flex; background: #101010; color: #fff; }
.start { width: 60px; }
.tsearch { width: 360px; display: flex; align-items: center; gap: 14px; padding-left: 15px; background: #f3f3f3; border: 1px solid #bbb; border-right: 0; color: #222; font-size: 18px; overflow: hidden; }
.tsearch input { flex: 1; min-width: 0; border: 0; background: none; outline: 0; }
.tsearch ::placeholder { color: #333; }
.scene { width: 100px; height: 48px; margin-left: -15px; }
.apps { display: flex; }
.app { width: 50px; margin: 0 6px; display: flex; align-items: center; justify-content: center; }
.app.tv { width: 60px; margin: 0 3px 0 0; }
.open { border-bottom: 3px solid #76b9ed; padding-top: 3px; }
.app.active { width: 62px; margin: 0; background: #333; }
.tray { margin-left: auto; width: 557px; display: flex; align-items: center; white-space: nowrap; }
.wx { display: flex; gap: 12px; width: 138px; margin: 0 10px; font-size: 17px; }
.up { width: 14px; height: 9px; margin-right: 17px; }
.tip { position: absolute; right: 1px; bottom: 1px; width: 321px; padding: 2px 5px; border: 1px solid #767676; background: #fff; color: #575757; white-space: nowrap; }
.mark { position: absolute; left: 845px; top: -28px; font: bold 52px/72px "DejaVu Sans", sans-serif; color: rgba(196, 196, 196, .4); pointer-events: none; }
```
